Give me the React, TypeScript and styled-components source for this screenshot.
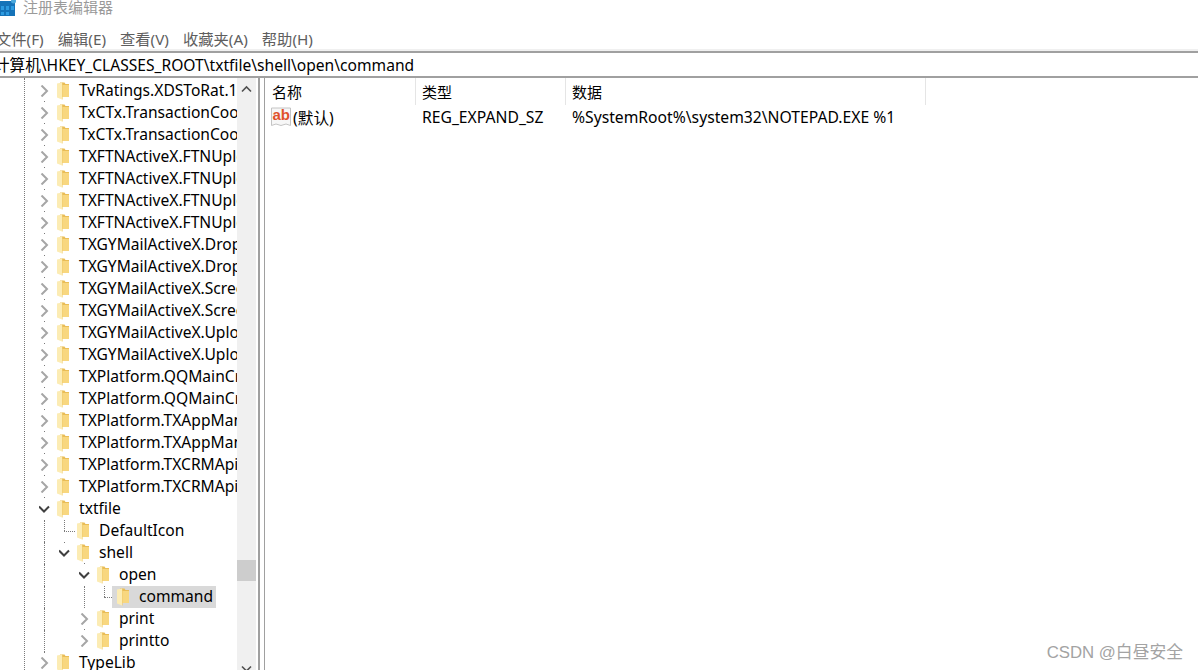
import React from "react";
import styled, { createGlobalStyle } from "styled-components";

const GlobalStyle = createGlobalStyle`
  html, body {
    margin: 0;
    padding: 0;
    background: #fff;
  }
`;

const Page = styled.div`
  position: relative;
  width: 1198px;
  height: 670px;
  overflow: hidden;
  background: #fff;
  color: #000;
  font-family: "Noto Sans", "Noto Sans CJK SC", sans-serif;
  font-size: 15.6px;
`;

const TitleBar = styled.div`
  display: flex;
  align-items: flex-start;
  gap: 7px;
  height: 14px;
  line-height: 14px;
  color: #9a9a9a;
  font-family: "Noto Sans CJK SC", sans-serif;
  font-size: 15px;
`;

const MenuBar = styled.div`
  display: flex;
  gap: 14px;
  height: 37px;
  box-sizing: border-box;
  padding-top: 11px;
  align-items: center;
  margin-left: -4px;
  color: #5e5e5e;
  font-size: 15.3px;
`;

const AddressBar = styled.div`
  height: 27px;
  box-sizing: border-box;
  display: flex;
  align-items: center;
  padding-bottom: 1px;
  border-top: 2px solid #a0a0a0;
  border-bottom: 2px solid #a0a0a0;
  box-shadow: 0 -2px 0 #f0f0f0;
  margin-left: -6px;
  font-size: 15.6px;
  white-space: nowrap;
`;

const Panes = styled.div`
  display: flex;
  height: 592px;
`;

const TreePane = styled.div`
  position: relative;
  width: 237px;
  flex: none;
  padding-top: 2px;
  overflow: hidden;
`;

const Row = styled.div<{ $level: number }>`
  position: relative;
  display: flex;
  align-items: center;
  height: 22px;
  padding-left: ${(p) => 39 + p.$level * 20}px;
  white-space: nowrap;
`;

const ChevronBox = styled.span`
  display: flex;
  width: 18px;
  flex: none;
  align-items: center;
`;

const Label = styled.span<{ $selected?: boolean }>`
  display: flex;
  align-items: center;
  gap: 10px;
  height: 22px;
  padding-right: ${(p) => (p.$selected ? 3 : 0)}px;
  padding-left: ${(p) => (p.$selected ? 5 : 0)}px;
  margin-left: ${(p) => (p.$selected ? -5 : 0)}px;
  background: ${(p) => (p.$selected ? "#d9d9d9" : "transparent")};
`;

const LabelText = styled.span`
  margin-bottom: 2px;
`;

const DotV = styled.i<{ $x: number; $top?: number; $h?: number }>`
  position: absolute;
  left: ${(p) => p.$x}px;
  top: ${(p) => p.$top ?? 0}px;
  height: ${(p) => p.$h ?? 22}px;
  border-left: 1px dotted #7a7a7a;
`;

const DotH = styled.i<{ $x: number; $w: number }>`
  position: absolute;
  left: ${(p) => p.$x}px;
  top: 11px;
  width: ${(p) => p.$w}px;
  border-top: 1px dotted #7a7a7a;
`;

const ScrollBar = styled.div`
  position: relative;
  width: 19px;
  flex: none;
  background: #f0f0f0;
`;

const ScrollArrow = styled.div<{ $down?: boolean }>`
  position: absolute;
  left: 4px;
  ${(p) => (p.$down ? "bottom: -3px;" : "top: 7px;")}
  display: flex;
`;

const ScrollThumb = styled.div`
  position: absolute;
  left: 0;
  top: 482px;
  width: 19px;
  height: 21px;
  background: #cdcdcd;
`;

const Splitter = styled.div`
  width: 4px;
  flex: none;
  margin-left: 2px;
  background: #fff;
  border-left: 2px solid #a0a0a0;
  border-right: 1px solid #a0a0a0;
`;

const ListPane = styled.div`
  flex: 1;
`;

const ColumnHeader = styled.div`
  display: grid;
  grid-template-columns: 151px 150px 360px;
  height: 27px;
  font-family: "Noto Sans CJK SC", sans-serif;
  font-size: 15px;
`;

const ColumnTitle = styled.div`
  display: flex;
  align-items: center;
  padding-left: 6px;
  border-right: 1px solid #e5e5e5;

  &:first-child {
    padding-left: 7px;
  }
`;

const ValueRow = styled.div`
  display: grid;
  grid-template-columns: 151px 150px 360px;
  height: 24px;
  align-items: center;
  font-size: 15.7px;
  white-space: nowrap;
`;

const ValueName = styled.div`
  display: flex;
  align-items: center;
  gap: 2px;
  padding-left: 6px;
`;

const ValueCell = styled.div`
  padding-left: 6px;
`;

const Watermark = styled.div`
  position: absolute;
  right: 15px;
  bottom: 7px;
  color: #a3a3a3;
  font-family: "Liberation Sans", "Noto Sans CJK SC", sans-serif;
  font-size: 16.8px;
`;

const Chevron = ({ open }: { open?: boolean }) => (
  <svg width="12" height="12" viewBox="0 0 12 12" fill="none">
    {open ? (
      <path d="M0 3.5 L5 8.5 L10 3.5" stroke="#404040" strokeWidth="2" />
    ) : (
      <path d="M2.5 0.5 L8 6 L2.5 11.5" stroke="#a6a6a6" strokeWidth="2" />
    )}
  </svg>
);

const Folder = () => (
  <svg width="12" height="18" viewBox="0 0 12 18" style={{ flex: "none" }}>
    <path d="M3 0.5 H7.5 L8.5 2 H12 V15 H3 Z" fill="#e9bd57" />
    <path d="M4 3 H12 V15 H4 Z" fill="#f8d77f" />
    <path d="M0 1.5 L5 0.5 V17.5 L0 15.5 Z" fill="#fcecb4" />
    <path d="M5 0.5 L5.6 0.5 V17.5 L5 17.5 Z" fill="#f0cb6e" />
  </svg>
);

const AppIcon = () => (
  <svg width="16" height="17" viewBox="0 0 16 17">
    <path d="M0 1 H15 V16 H0 Z" fill="#1673b8" />
    <path
      d="M1 6 H4 V10 H1 Z M6 6 H9 V10 H6 Z M11 6 H14 V10 H11 Z M1 12 H4 V15 H1 Z M6 12 H9 V15 H6 Z"
      fill="#2e9be0"
    />
    <circle cx="13.5" cy="1" r="2.5" fill="#4aa8dc" />
  </svg>
);

const StringIcon = () => (
  <svg width="20" height="20" viewBox="0 0 20 20">
    <path
      d="M0.5 1 H19.5 V18.5 L15 17 L10 18.5 L5 17 L0.5 18.5 Z"
      fill="#f7f7f7"
      stroke="#c4c4c4"
    />
    <text
      x="1.5"
      y="13"
      fill="#e0522c"
      fontFamily="Liberation Sans, sans-serif"
      fontSize="15"
      fontWeight="700"
    >
      ab
    </text>
  </svg>
);

type Node = {
  name: string;
  level: number;
  state?: "open" | "closed" | "leaf";
  selected?: boolean;
  guides?: React.ReactNode;
};

const names = [
  "TvRatings.XDSToRat.1",
  "TxCTx.TransactionCoordinator",
  "TxCTx.TransactionCoordinator.1",
  "TXFTNActiveX.FTNUpload",
  "TXFTNActiveX.FTNUpload.1",
  "TXFTNActiveX.FTNUploader",
  "TXFTNActiveX.FTNUploader.1",
  "TXGYMailActiveX.DropFile",
  "TXGYMailActiveX.DropFile.1",
  "TXGYMailActiveX.ScreenCapture",
  "TXGYMailActiveX.ScreenCapture.1",
  "TXGYMailActiveX.Uploader",
  "TXGYMailActiveX.Uploader.1",
  "TXPlatform.QQMainCr",
  "TXPlatform.QQMainCr.1",
  "TXPlatform.TXAppManager",
  "TXPlatform.TXAppManager.1",
  "TXPlatform.TXCRMApi",
  "TXPlatform.TXCRMApi.1",
];

const nodes: Node[] = [
  ...names.map((name) => ({ name, level: 0, guides: <DotV $x={44} $top={21} $h={1} /> })),
  { name: "txtfile", level: 0, state: "open" },
  {
    name: "DefaultIcon",
    level: 1,
    state: "leaf",
    guides: (
      <>
        <DotV $x={44} />
        <DotV $x={64} $h={11} />
        <DotH $x={64} $w={11} />
      </>
    ),
  },
  {
    name: "shell",
    level: 1,
    state: "open",
    guides: (
      <>
        <DotV $x={44} />
        <DotV $x={64} $top={0} $h={1} />
        <DotV $x={84} $top={21} $h={1} />
      </>
    ),
  },
  { name: "open", level: 2, state: "open", guides: <DotV $x={44} /> },
  {
    name: "command",
    level: 3,
    state: "leaf",
    selected: true,
    guides: (
      <>
        <DotV $x={44} />
        <DotV $x={84} />
        <DotV $x={104} $h={11} />
        <DotH $x={104} $w={8} />
      </>
    ),
  },
  {
    name: "print",
    level: 2,
    guides: (
      <>
        <DotV $x={44} />
        <DotV $x={84} $top={21} $h={1} />
      </>
    ),
  },
  { name: "printto", level: 2, guides: <DotV $x={44} /> },
  { name: "TypeLib", level: 0, guides: <DotV $x={44} $h={1} /> },
];

const App = () => (
  <Page>
    <GlobalStyle />
    <TitleBar>
      <AppIcon />
      <span>注册表编辑器</span>
    </TitleBar>
    <MenuBar>
      <span>文件(F)</span>
      <span>编辑(E)</span>
      <span>查看(V)</span>
      <span>收藏夹(A)</span>
      <span>帮助(H)</span>
    </MenuBar>
    <AddressBar>计算机\HKEY_CLASSES_ROOT\txtfile\shell\open\command</AddressBar>
    <Panes>
      <TreePane>
        <DotV $x={24} $h={592} />
        {nodes.map((node) => (
          <Row key={node.name} $level={node.level}>
            {node.guides}
            <ChevronBox>
              {node.state !== "leaf" && <Chevron open={node.state === "open"} />}
            </ChevronBox>
            <Label $selected={node.selected}>
              <Folder />
              <LabelText>{node.name}</LabelText>
            </Label>
          </Row>
        ))}
      </TreePane>
      <ScrollBar>
        <ScrollArrow>
          <svg width="11" height="8" viewBox="0 0 11 8" fill="none">
            <path d="M1 6.5 L5.5 2 L10 6.5" stroke="#505050" strokeWidth="1.6" />
          </svg>
        </ScrollArrow>
        <ScrollThumb />
        <ScrollArrow $down>
          <svg width="11" height="8" viewBox="0 0 11 8" fill="none">
            <path d="M1 1.5 L5.5 6 L10 1.5" stroke="#505050" strokeWidth="1.6" />
          </svg>
        </ScrollArrow>
      </ScrollBar>
      <Splitter />
      <ListPane>
        <ColumnHeader>
          <ColumnTitle>名称</ColumnTitle>
          <ColumnTitle>类型</ColumnTitle>
          <ColumnTitle>数据</ColumnTitle>
        </ColumnHeader>
        <ValueRow>
          <ValueName>
            <StringIcon />
            <span>(默认)</span>
          </ValueName>
          <ValueCell>REG_EXPAND_SZ</ValueCell>
          <ValueCell>%SystemRoot%\system32\NOTEPAD.EXE %1</ValueCell>
        </ValueRow>
      </ListPane>
    </Panes>
    <Watermark>CSDN @白昼安全</Watermark>
  </Page>
);

export default App;
